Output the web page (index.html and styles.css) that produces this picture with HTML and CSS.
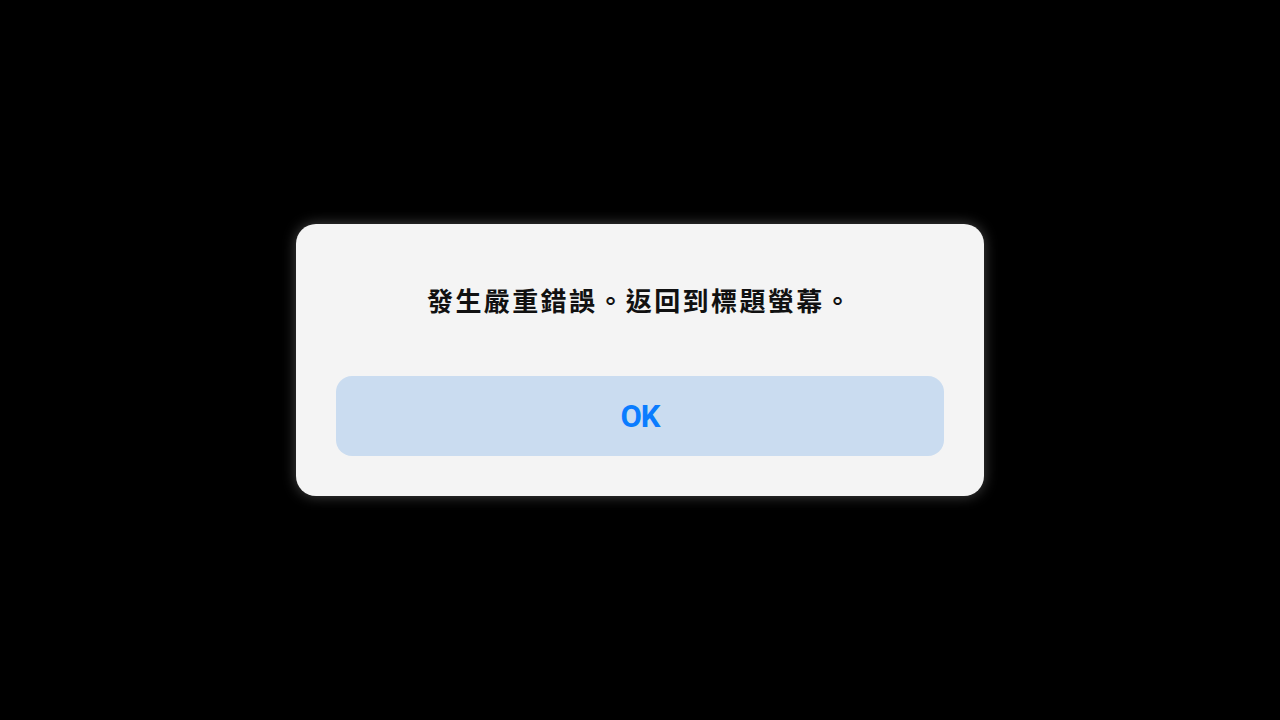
FILE: index.html
```html
<!DOCTYPE html>
<html lang="zh-Hant">
	<head>
		<meta charset="UTF-8" />
		<meta name="viewport" content="width=device-width, initial-scale=1.0" />
		<title>錯誤</title>
		<link rel="stylesheet" href="styles.css">
	</head>
	<body>
		<div class="dialog">
			<p class="message">發生嚴重錯誤。返回到標題螢幕。</p>
			<button class="btn-ok">OK</button>
		</div>
	</body>
</html>
```

FILE: styles.css
```css
body {
	margin: 0;
	background-color: #000;
	font-family: "Noto Sans CJK TC", "Noto Sans", sans-serif;
	display: flex;
	justify-content: center;
	align-items: center;
	height: 720px;
}

.dialog {
	width: 688px;
	box-sizing: border-box;
	padding: 56px 40px 40px;
	background-color: #f4f4f4;
	border-radius: 20px;
	box-shadow: 0 0 14px rgba(255, 255, 255, 0.28);
	display: flex;
	flex-direction: column;
	gap: 56px;
}

.message {
	margin: 0;
	height: 40px;
	line-height: 40px;
	text-align: center;
	font-size: 26px;
	font-weight: bold;
	letter-spacing: 2.4px;
	color: #111;
}

.btn-ok {
	height: 80px;
	border: none;
	border-radius: 16px;
	background-color: #cadcf0;
	color: #0a7cff;
	font-family: Roboto, "Noto Sans", sans-serif;
	font-size: 31px;
	font-weight: bold;
	letter-spacing: -1px;
	cursor: pointer;
}
```
